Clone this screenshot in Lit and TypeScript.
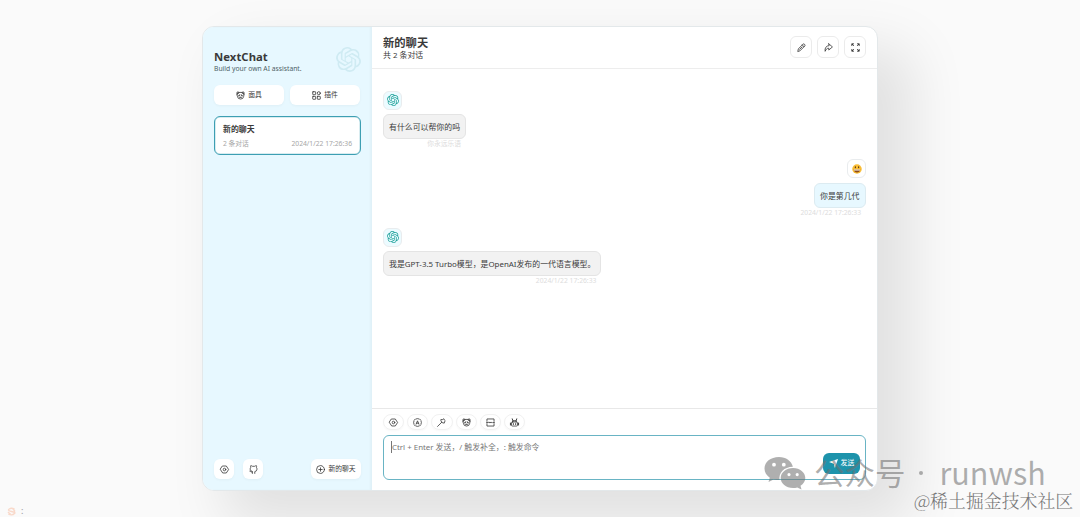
import { LitElement, html, css, svg, nothing } from "lit";
import { customElement, property } from "lit/decorators.js";

const OPENAI =
  "M22.2819 9.8211a5.9847 5.9847 0 0 0-.5157-4.9108 6.0462 6.0462 0 0 0-6.5098-2.9A6.0651 6.0651 0 0 0 4.9807 4.1818a5.9847 5.9847 0 0 0-3.9977 2.9 6.0462 6.0462 0 0 0 .7427 7.0966 5.98 5.98 0 0 0 .511 4.9107 6.051 6.051 0 0 0 6.5146 2.9001A5.9847 5.9847 0 0 0 13.2599 24a6.0557 6.0557 0 0 0 5.7718-4.2058 5.9894 5.9894 0 0 0 3.9977-2.9001 6.0557 6.0557 0 0 0-.7475-7.0729zm-9.022 12.6081a4.4755 4.4755 0 0 1-2.8764-1.0408l.1419-.0804 4.7783-2.7582a.7948.7948 0 0 0 .3927-.6813v-6.7369l2.02 1.1686a.071.071 0 0 1 .038.052v5.5826a4.504 4.504 0 0 1-4.4945 4.4944zm-9.6607-4.1254a4.4708 4.4708 0 0 1-.5346-3.0137l.142.0852 4.783 2.7582a.7712.7712 0 0 0 .7806 0l5.8428-3.3685v2.3324a.0804.0804 0 0 1-.0332.0615L9.74 19.9502a4.4992 4.4992 0 0 1-6.1408-1.6464zM2.3408 7.8956a4.485 4.485 0 0 1 2.3655-1.9728V11.6a.7664.7664 0 0 0 .3879.6765l5.8144 3.3543-2.0201 1.1685a.0757.0757 0 0 1-.071 0l-4.8303-2.7865A4.504 4.504 0 0 1 2.3408 7.872zm16.5963 3.8558L13.1038 8.364 15.1192 7.2a.0757.0757 0 0 1 .071 0l4.8303 2.7913a4.4944 4.4944 0 0 1-.6765 8.1042v-5.6772a.79.79 0 0 0-.407-.667zm2.0107-3.0231l-.142-.0852-4.7735-2.7818a.7759.7759 0 0 0-.7854 0L9.409 9.2297V6.8974a.0662.0662 0 0 1 .0284-.0615l4.8303-2.7866a4.4992 4.4992 0 0 1 6.6802 4.66zM8.3065 12.863l-2.02-1.1638a.0804.0804 0 0 1-.038-.0567V6.0742a4.4992 4.4992 0 0 1 7.3757-3.4537l-.142.0805L8.704 5.459a.7948.7948 0 0 0-.3927.6813zm1.0976-2.3654l2.602-1.4998 2.6069 1.4998v2.9994l-2.5974 1.4997-2.6067-1.4997Z";

const mask = svg`<path d="M1.800 6.500V2Q3.500 1.300 5.500 2.500H10.500Q12.500 1.300 14.200 2V6.500L13.500 10Q13 14.300 8 14.300T2.500 10Z"/><path d="M2 5.500 5.300 2.900M14 5.500 10.700 2.900M4.800 8.800 6.700 7M11.200 8.800 9.300 7M6.500 11.300H9.500" stroke-width="1.800"/>`;

const ICONS: Record<string, unknown> = {
  mask,
  plugin: svg`<rect x="1.300" y="1.300" width="5.200" height="5.200" rx=".6"/><circle cx="12.100" cy="3.900" r="2.700"/><rect x="1.300" y="9.500" width="5.200" height="5.200" rx=".6"/><rect x="9.500" y="9.500" width="5.200" height="5.200" rx=".6"/>`,
  edit: svg`<path d="M1.500 14.500 2.400 10.500 10.500 2.100Q12 .8 13.500 2.400T13.900 5.300L5.700 13.500Z M9.300 3.500 12.500 6.700M4.800 11.200 9 7"/>`,
  share: svg`<path d="M8.500 1.300 15 7 8.500 12.500V9.200C5.500 9.200 3.500 11 2 14.800 1 9 4 4.800 8.500 4.700Z"/>`,
  full: svg`<path d="M1.500 4.500V1.500H4.500M11.500 1.500H14.500V4.500M14.500 11.500V14.500H11.500M4.500 14.500H1.500V11.500M2 2 4.500 4.500M14 2 11.500 4.500M2 14 4.500 11.500M14 14 11.500 11.500" stroke-width="1.700"/>`,
  gear: svg`<path d="M4.800 1.800H11.200L15.300 8 11.200 14.200H4.800L.7 8Z"/><circle cx="8" cy="8" r="2.300"/>`,
  auto: svg`<path d="M5 1.700Q8 .2 11 1.700M14.300 5Q15.800 8 14.300 11M11 14.300Q8 15.800 5 14.300M1.700 11Q.2 8 1.700 5M2.400 3.500 3.500 2.400M12.500 2.400 13.600 3.500M12.500 13.600 13.600 12.500M2.400 12.500 3.500 13.600M5.500 11 8 5 10.500 11M6.500 9.200H9.500"/>`,
  prompt: svg`<path d="M1 15 8.500 7.500"/><path d="M7.500 2.800 10.200 2.700 12 1.300 13 3.500 14.800 5 13.300 6.800 13 9 10.500 8.800 8.500 7.500 7.300 5.500Z"/>`,
  clear: svg`<path d="M1.700 6V1.700H14.300V6M1.700 10V14.300H14.300V10M1 8H4L5.500 7 7 9 9 7 11 9 12 8H15"/>`,
  robot: svg`<rect x="2.700" y="7" width="10.600" height="7.300" rx="1.500"/><path d="M.8 9V12.500M15.200 9V12.500M6 10V11.500M10 10V11.500M5 7V5H11V7M5 4.500 4 1.500M11 4.500 12 1.500" stroke-width="1.700"/>`,
  github: svg`<path d="M6 15V12.300C3.500 12.800 3.200 11.500 1.500 11M10.300 15V11.800Q14.200 11 14.200 7.500 14.200 5.500 13.300 4.400 13.800 2.700 13.200 1.200 11.500 1.200 10 2.300H6.200Q4.800 1.200 3.100 1.200 2.500 2.700 3 4.400 2.100 5.500 2.100 7.500 2.100 11 6 11.700"/>`,
  add: svg`<circle cx="8" cy="8" r="7"/><path d="M8 5V11M5 8H11"/>`,
};

@customElement("nc-icon")
class NcIcon extends LitElement {
  @property() name = "";
  static styles = css`
    :host { display: block; width: 9px; height: 9px; color: #333; }
    svg { display: block; width: 100%; height: 100%; overflow: visible; }
  `;
  render() {
    if (this.name === "openai")
      return html`<svg viewBox="0 0 24 24" fill="currentColor"><path d=${OPENAI} /></svg>`;
    if (this.name === "send")
      return html`<svg viewBox="0 0 16 16" fill="currentColor"><path d="M0 5.500 16 0 10.500 16 8.500 8.500Z" /></svg>`;
    if (this.name === "smile")
      return html`<svg viewBox="0 0 20 20"><circle cx="10" cy="10" r="9.500" fill="#f9bd35" /><ellipse cx="6.800" cy="6.500" rx="1.300" ry="2.200" fill="#5f3c16" /><ellipse cx="13.200" cy="6.500" rx="1.300" ry="2.200" fill="#5f3c16" /><path d="M3.500 11H16.500Q15.500 17 10 17T3.500 11Z" fill="#8a4a1a" /><path d="M4 11H16V13.200H4Z" fill="#fff" /></svg>`;
    return html`<svg viewBox="0 0 16 16" fill="none" stroke="currentColor" stroke-width="1.400" stroke-linejoin="round" stroke-linecap="round">${ICONS[this.name] ?? nothing}</svg>`;
  }
}

interface Message { user?: boolean; text: string; date: string; }

const MESSAGES: Message[] = [
  { text: "有什么可以帮你的吗", date: "你永远乐语" },
  { user: true, text: "你是第几代", date: "2024/1/22 17:26:33" },
  { text: "我是GPT-3.5 Turbo模型，是OpenAI发布的一代语言模型。", date: "2024/1/22 17:26:33" },
];

@customElement("app-root")
class AppRoot extends LitElement {
  static styles = css`
    :host {
      display: block; position: relative; box-sizing: border-box;
      width: 1080px; height: 517px; padding: 26px 0 0 202px; overflow: hidden;
      background: #fafafa; color: #3a3a3a;
      font-family: "Noto Sans", "Noto Sans CJK SC", sans-serif;
      font-size: 7.900px; line-height: 1.5; white-space: nowrap;
    }
    * { box-sizing: border-box; }
    .window {
      width: 676px; height: 465px; display: flex; overflow: hidden;
      border: 1px solid #e3e8ea; border-radius: 12px; background: #fff;
      box-shadow: 28px 28px 56px 6px rgba(0, 0, 0, 0.1);
    }
    .sidebar {
      width: 169px; padding: 22px 11px 11px; display: flex; flex-direction: column;
      background: #e7f8ff; box-shadow: inset -2px 0 2px rgba(0, 0, 0, 0.03);
    }
    .brand { display: flex; justify-content: space-between; height: 36px; }
    .name { font-size: 11.300px; font-weight: 700; line-height: 15px; letter-spacing: 0.05px; }
    .slogan { font-size: 6.750px; line-height: 10px; color: #4e5f66; }
    .logo { width: 25px; height: 25px; margin-top: -2px; color: #cfebf3; }
    .pair { display: flex; gap: 6px; }
    .pill {
      display: flex; align-items: center; justify-content: center; gap: 3px;
      height: 20px; border-radius: 6px; background: #fff; font-size: 6.800px;
      box-shadow: 0 1px 3px rgba(0, 0, 0, 0.04);
    }
    .pair .pill { width: 70px; }
    .pill.square { width: 20px; }
    .pill.fresh { width: 50px; }
    .session {
      height: 39px; margin-top: 11px; padding: 5px 8px; border: 1.500px solid #3d9fb3;
      border-radius: 6px; background: #fff; box-shadow: inset 0 0 0 0.500px rgba(61, 159, 179, 0.4);
    }
    .session-title { font-size: 7.900px; font-weight: 700; line-height: 14px; }
    .session-info {
      display: flex; justify-content: space-between; margin-top: 2px;
      font-size: 6.750px; line-height: 11px; color: #a6a6a6;
    }
    .tail { margin-top: auto; display: flex; gap: 9px; }
    .tail .fresh { margin-left: auto; }
    .main { flex: 1; display: flex; flex-direction: column; min-width: 0; }
    .header {
      height: 42px; padding: 9px 11px 0; display: flex; justify-content: space-between;
      border-bottom: 1px solid #ededed;
    }
    .title { font-size: 11.300px; font-weight: 700; line-height: 13px; }
    .subtitle { font-size: 7.900px; line-height: 12px; }
    .actions { display: flex; gap: 5px; }
    .action {
      width: 22px; height: 22px; display: grid; place-items: center;
      border: 1px solid #ebebeb; border-radius: 6px;
    }
    .body { flex: 1; padding: 21.500px 11px 0; display: flex; flex-direction: column; }
    .message { display: flex; flex-direction: column; align-items: flex-start; height: 68.700px; }
    .message.user { align-items: flex-end; }
    .avatar {
      width: 19px; height: 19px; display: grid; place-items: center;
      border: 1px solid #e9ecee; border-radius: 6px; background: #ecfbff;
    }
    .user .avatar { background: #fff; }
    .avatar nc-icon { width: 12px; height: 12px; color: #20a29b; }
    .user .avatar nc-icon { width: 10px; height: 10px; }
    .stack { display: flex; flex-direction: column; align-items: flex-end; }
    .bubble {
      height: 25px; margin-top: 4.500px; padding: 0 5px; line-height: 24.500px;
      border: 1px solid #e4e4e4; border-radius: 6px; background: #f2f2f2;
    }
    .user .bubble { background: #e7f8ff; border-color: #dcebf1; padding: 0 5.500px; }
    .date { padding-right: 5px; font-size: 6.750px; line-height: 9px; color: #dcdcdc; }
    .panel { height: 82px; padding: 5px 11px 0; border-top: 1px solid #e8e8e8; }
    .chips { display: flex; gap: 3px; }
    .chip {
      width: 21.200px; height: 16px; display: grid; place-items: center;
      border: 1px solid #f1f1f1; border-radius: 10px; box-shadow: 0 1px 2px rgba(0, 0, 0, 0.03);
    }
    .editor {
      height: 45px; margin-top: 5px; padding: 5px 5px 5px 7px; display: flex;
      justify-content: space-between; border: 1px solid #69b4c4; border-radius: 6px;
    }
    .placeholder {
      height: 12px; line-height: 12px; border-left: 1px solid #777; color: #777;
    }
    .send {
      align-self: flex-end; width: 37px; height: 21px; display: flex; gap: 3px;
      align-items: center; justify-content: center; border-radius: 6px;
      background: #1d93ab; color: #fff; font-size: 6.900px;
    }
    .send nc-icon { color: #fff; }
    .account {
      position: absolute; left: 764px; top: 452px; display: flex; align-items: center;
      color: rgba(112, 112, 112, 0.56); font-family: "Noto Sans CJK SC", sans-serif;
      font-size: 30.500px; line-height: 40px;
    }
    .wechat { width: 42px; height: 36px; margin-right: 8px; }
    .dot { width: 4px; height: 4px; margin: 2px 17px 0 13px; border-radius: 50%; background: currentColor; }
    .community {
      position: absolute; left: 914px; top: 488px; font-size: 17.900px; line-height: 24px;
      font-family: "Noto Serif CJK SC", "Noto Sans CJK SC", serif; font-weight: 300; color: #777;
    }
    .corner {
      position: absolute; left: 7px; top: 506px; display: flex; align-items: center; gap: 5px;
      font-size: 9px; line-height: 10px; color: #999;
    }
    .corner svg { width: 9px; height: 9px; }
  `;

  private bubble(m: Message) {
    return html`<div class="message ${m.user ? "user" : ""}">
      <div class="avatar"><nc-icon name=${m.user ? "smile" : "openai"}></nc-icon></div>
      <div class="stack"><div class="bubble">${m.text}</div><div class="date">${m.date}</div></div>
    </div>`;
  }

  render() {
    return html`
      <div class="window">
        <aside class="sidebar">
          <div class="brand">
            <div><div class="name">NextChat</div><div class="slogan">Build your own AI assistant.</div></div>
            <nc-icon class="logo" name="openai"></nc-icon>
          </div>
          <div class="pair">
            <div class="pill"><nc-icon name="mask"></nc-icon>面具</div>
            <div class="pill"><nc-icon name="plugin"></nc-icon>插件</div>
          </div>
          <div class="session">
            <div class="session-title">新的聊天</div>
            <div class="session-info"><span>2 条对话</span><span>2024/1/22 17:26:36</span></div>
          </div>
          <div class="tail">
            <div class="pill square"><nc-icon name="gear"></nc-icon></div>
            <div class="pill square"><nc-icon name="github"></nc-icon></div>
            <div class="pill fresh"><nc-icon name="add"></nc-icon>新的聊天</div>
          </div>
        </aside>
        <main class="main">
          <header class="header">
            <div><div class="title">新的聊天</div><div class="subtitle">共 2 条对话</div></div>
            <div class="actions">
              ${["edit", "share", "full"].map((n) => html`<div class="action"><nc-icon name=${n}></nc-icon></div>`)}
            </div>
          </header>
          <section class="body">${MESSAGES.map((m) => this.bubble(m))}</section>
          <footer class="panel">
            <div class="chips">
              ${["gear", "auto", "prompt", "mask", "clear", "robot"].map((n) => html`<div class="chip"><nc-icon name=${n}></nc-icon></div>`)}
            </div>
            <div class="editor">
              <div class="placeholder">Ctrl + Enter 发送，/ 触发补全，: 触发命令</div>
              <div class="send"><nc-icon name="send"></nc-icon>发送</div>
            </div>
          </footer>
        </main>
      </div>
      <div class="account">
        <svg class="wechat" viewBox="0 0 42 36" fill="currentColor" fill-rule="evenodd">
          <path d="M15 3C6.500 3 .5 8 .5 14.500c0 3.800 2 7 5.300 9.200L4.500 28l5-2.600c2 .6 4 .8 6 .7C14.500 18.500 20 13 28.900 12.700 27.500 7 22 3 15 3ZM10 8.800a1.900 1.900 0 1 1 0 3.800 1.900 1.900 0 0 1 0-3.800ZM19.800 8.800a1.900 1.900 0 1 1 0 3.800 1.900 1.900 0 0 1 0-3.800Z" />
          <path d="M29 14c-7 0-12.300 4.500-12.300 10S22 34 29 34c1.500 0 3-.2 4.300-.6L37.500 35.500l-1-3.800c3-1.900 4.800-4.600 4.800-7.700C41.300 18.500 36 14 29 14ZM25 19a1.600 1.600 0 1 1 0 3.200 1.600 1.600 0 0 1 0-3.200ZM33.200 19a1.600 1.600 0 1 1 0 3.200 1.600 1.600 0 0 1 0-3.200Z" />
        </svg>
        <span>公众号</span><span class="dot"></span><span>runwsh</span>
      </div>
      <div class="community">@稀土掘金技术社区</div>
      <div class="corner">
        <svg viewBox="0 0 10 10" fill="none" stroke="#f9d9ca" stroke-width="1.500"><path d="M8.500 2.500Q5 .5 2.500 2.200T5 5 8.500 7Q6 10 1.500 8M1 5.500 4 8M6 1.500 9 5" /></svg>
        <span>:</span>
      </div>
    `;
  }
}
